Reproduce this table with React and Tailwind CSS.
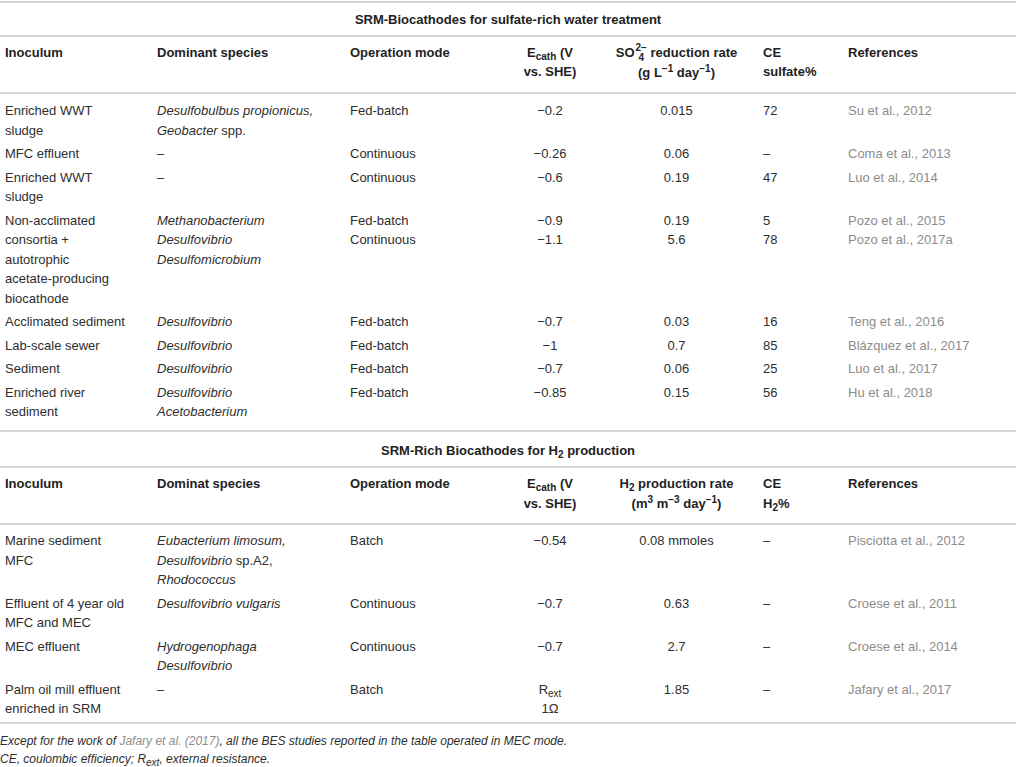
const sulfateRows = [
  { inoc: ["Enriched WWT", "sludge"], species: [<><i>Desulfobulbus propionicus,</i></>, <><i>Geobacter</i> spp.</>], mode: ["Fed-batch"], ecath: ["−0.2"], rate: ["0.015"], ce: ["72"], refs: ["Su et al., 2012"] },
  { inoc: ["MFC effluent"], species: ["–"], mode: ["Continuous"], ecath: ["−0.26"], rate: ["0.06"], ce: ["–"], refs: ["Coma et al., 2013"] },
  { inoc: ["Enriched WWT", "sludge"], species: ["–"], mode: ["Continuous"], ecath: ["−0.6"], rate: ["0.19"], ce: ["47"], refs: ["Luo et al., 2014"] },
  {
    inoc: ["Non-acclimated", "consortia +", "autotrophic", "acetate-producing", "biocathode"],
    species: [<i>Methanobacterium</i>, <i>Desulfovibrio</i>, <i>Desulfomicrobium</i>],
    mode: ["Fed-batch", "Continuous"],
    ecath: ["−0.9", "−1.1"],
    rate: ["0.19", "5.6"],
    ce: ["5", "78"],
    refs: ["Pozo et al., 2015", "Pozo et al., 2017a"],
  },
  { inoc: ["Acclimated sediment"], species: [<i>Desulfovibrio</i>], mode: ["Fed-batch"], ecath: ["−0.7"], rate: ["0.03"], ce: ["16"], refs: ["Teng et al., 2016"] },
  { inoc: ["Lab-scale sewer"], species: [<i>Desulfovibrio</i>], mode: ["Fed-batch"], ecath: ["−1"], rate: ["0.7"], ce: ["85"], refs: ["Blázquez et al., 2017"] },
  { inoc: ["Sediment"], species: [<i>Desulfovibrio</i>], mode: ["Fed-batch"], ecath: ["−0.7"], rate: ["0.06"], ce: ["25"], refs: ["Luo et al., 2017"] },
  { inoc: ["Enriched river", "sediment"], species: [<i>Desulfovibrio</i>, <i>Acetobacterium</i>], mode: ["Fed-batch"], ecath: ["−0.85"], rate: ["0.15"], ce: ["56"], refs: ["Hu et al., 2018"] },
];

const hydrogenRows = [
  {
    inoc: ["Marine sediment", "MFC"],
    species: [<i>Eubacterium limosum,</i>, <><i>Desulfovibrio</i> sp.A2,</>, <i>Rhodococcus</i>],
    mode: ["Batch"], ecath: ["−0.54"], rate: ["0.08 mmoles"], ce: ["–"], refs: ["Pisciotta et al., 2012"],
  },
  { inoc: ["Effluent of 4 year old", "MFC and MEC"], species: [<i>Desulfovibrio vulgaris</i>], mode: ["Continuous"], ecath: ["−0.7"], rate: ["0.63"], ce: ["–"], refs: ["Croese et al., 2011"] },
  { inoc: ["MEC effluent"], species: [<i>Hydrogenophaga</i>, <i>Desulfovibrio</i>], mode: ["Continuous"], ecath: ["−0.7"], rate: ["2.7"], ce: ["–"], refs: ["Croese et al., 2014"] },
  {
    inoc: ["Palm oil mill effluent", "enriched in SRM"], species: ["–"], mode: ["Batch"],
    ecath: [<>R<Sub>ext</Sub></>, "1Ω"],
    rate: ["1.85"], ce: ["–"], refs: ["Jafary et al., 2017"],
  },
];

function Lines({ items }) {
  return items.map((item, i) => <div key={i}>{item}</div>);
}

// stacked super/subscript, e.g. SO4 2−
function Stack({ top, bottom }) {
  return (
    <span className="ml-px inline-flex flex-col align-[6px] text-[10px] leading-[10px]">
      <span>{top}</span>
      <span>{bottom}</span>
    </span>
  );
}

function Sup({ children }) {
  return <sup className="top-0 align-[5px] text-[10px] leading-none">{children}</sup>;
}

function Sub({ children }) {
  return <sub className="bottom-0 align-[-3px] text-[10px] leading-none">{children}</sub>;
}

function TitleRow({ pad, children }) {
  return (
    <tr className="border-b-2 border-[#d4d4d4]">
      <td colSpan={7} className={`${pad} text-center font-bold text-[#222]`}>
        {children}
      </td>
    </tr>
  );
}

function HeaderRow({ species, rate, ce }) {
  const th = "px-[5px] pt-[6px] pb-[10px] align-top font-bold text-[#222]";
  return (
    <tr className="border-b-2 border-[#d4d4d4]">
      <th className={`${th} text-left`}>Inoculum</th>
      <th className={`${th} text-left`}>{species}</th>
      <th className={`${th} text-left`}>Operation mode</th>
      <th className={`${th} text-center`}>
        E<Sub>cath</Sub> (V
        <br />
        vs. SHE)
      </th>
      <th className={`${th} text-center`}>{rate}</th>
      <th className={`${th} text-left`}>{ce}</th>
      <th className={`${th} text-left`}>References</th>
    </tr>
  );
}

function BodyRows({ rows, firstPad, lastPad }) {
  return rows.map((r, i) => {
    const pt = i === 0 ? firstPad : "pt-[2px]";
    const pb = i === rows.length - 1 ? lastPad : "pb-[2px]";
    const td = `px-[5px] align-top ${pt} ${pb}`;
    return (
      <tr key={i}>
        <td className={td}><Lines items={r.inoc} /></td>
        <td className={td}><Lines items={r.species} /></td>
        <td className={td}><Lines items={r.mode} /></td>
        <td className={`${td} text-center`}><Lines items={r.ecath} /></td>
        <td className={`${td} text-center`}><Lines items={r.rate} /></td>
        <td className={td}><Lines items={r.ce} /></td>
        <td className={`${td} text-[#8c8c8c]`}><Lines items={r.refs} /></td>
      </tr>
    );
  });
}

export default function App() {
  return (
    <div className="min-h-[767px] bg-white pt-[1px] font-['Liberation_Sans',Arial,sans-serif] text-[13px] leading-[19.5px] text-[#2e2e2e]">
      <table className="w-[1016px] table-fixed border-collapse border-t-2 border-[#d4d4d4]">
        <colgroup>
          <col className="w-[152px]" />
          <col className="w-[193px]" />
          <col className="w-[160px]" />
          <col className="w-[90px]" />
          <col className="w-[163px]" />
          <col className="w-[85px]" />
          <col className="w-[173px]" />
        </colgroup>
        <tbody>
          <TitleRow pad="pt-[7px] pb-[5px]">SRM-Biocathodes for sulfate-rich water treatment</TitleRow>
          <HeaderRow
            species="Dominant species"
            rate={
              <>
                SO<Stack top="2−" bottom="4" /> reduction rate
                <br />
                (g L<Sup>−1</Sup> day<Sup>−1</Sup>)
              </>
            }
            ce={
              <>
                CE
                <br />
                sulfate%
              </>
            }
          />
          <BodyRows rows={sulfateRows} firstPad="pt-[7px]" lastPad="pb-[8px]" />
          <tr className="border-t-2 border-[#d4d4d4]" />
          <TitleRow pad="pt-[10px] pb-[6px]">
            SRM-Rich Biocathodes for H<Sub>2</Sub> production
          </TitleRow>
          <HeaderRow
            species="Dominat species"
            rate={
              <>
                H<Sub>2</Sub> production rate
                <br />
                (m<Sup>3</Sup> m<Sup>−3</Sup> day<Sup>−1</Sup>)
              </>
            }
            ce={
              <>
                CE
                <br />
                H<Sub>2</Sub>%
              </>
            }
          />
          <BodyRows rows={hydrogenRows} firstPad="pt-[6px]" lastPad="pb-[3px]" />
          <tr className="border-t-2 border-[#d4d4d4]" />
        </tbody>
      </table>

      <div className="pt-[9px] text-[12px] italic leading-[18px] text-[#2e2e2e]">
        <p>
          Except for the work of <span className="text-[#8c8c8c]">Jafary et al. (2017)</span>, all the BES studies reported in the table operated in MEC mode.
        </p>
        <p>
          CE, coulombic efficiency; R<Sub>ext</Sub>, external resistance.
        </p>
      </div>
    </div>
  );
}
